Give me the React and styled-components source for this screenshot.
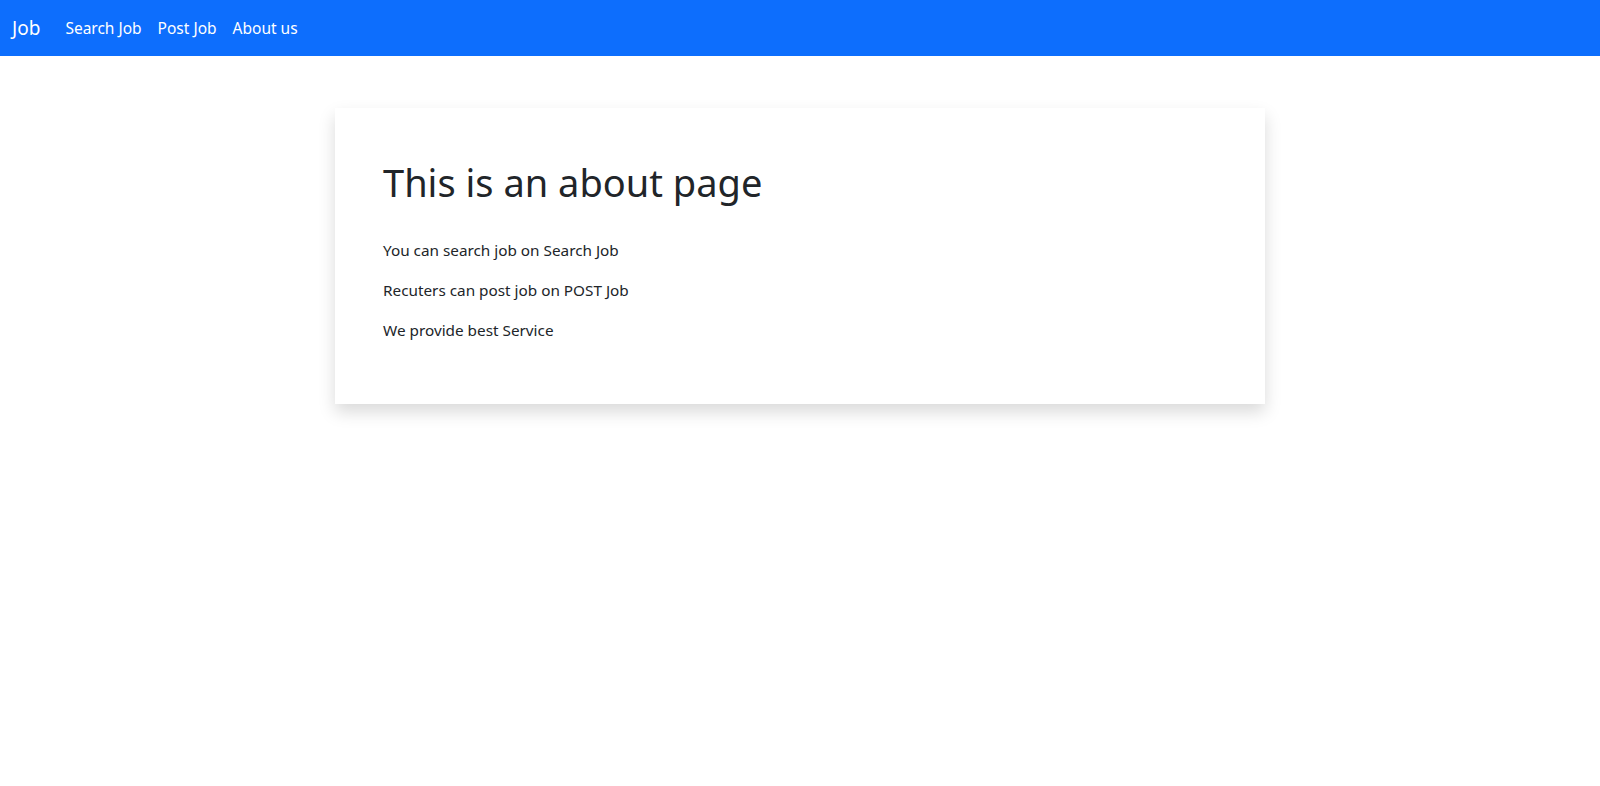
import React from 'react'
import styled, { createGlobalStyle } from 'styled-components';

const GlobalStyle = createGlobalStyle`
  body {
    margin: 0;
    font-family: 'Segoe UI', 'Noto Sans', sans-serif;
    color: #212529;
    background: #fff;
  }
  #root {
    min-height: 100vh;
  }
`;

const NavBar = styled.nav`
  display: flex;
  align-items: center;
  height: 56px;
  padding: 0 12px;
  background-color: #0d6efd;
`;

const Brand = styled.a`
  color: #fff;
  font-size: 19px;
  margin-right: 17px;
  text-decoration: none;
`;

const NavList = styled.div`
  display: flex;
  align-items: center;
`;

const NavLink = styled.a`
  color: #fff;
  font-size: 15.5px;
  padding: 8px;
  text-decoration: none;
  cursor: pointer;
`;

const Main = styled.main`
  display: flex;
  justify-content: center;
  padding-top: 52px;
`;

const Card = styled.div`
  width: 930px;
  box-sizing: border-box;
  padding: 52px 48px 46px;
  background-color: #fff;
  box-shadow: 0 .5rem 1rem rgba(0, 0, 0, .15);
`;

const Title = styled.h1`
  font-size: 38px;
  font-weight: 400;
  line-height: 1.2;
  margin: 0 0 32px;
`;

const Text = styled.p`
  font-size: 15.3px;
  line-height: 24px;
  margin: 0 0 16px;
`;

function App() {
    return (
        <>
            <GlobalStyle />
            <NavBar>
                <Brand>Job</Brand>
                <NavList>
                    <NavLink>Search Job</NavLink>
                    <NavLink>Post Job</NavLink>
                    <NavLink>About us</NavLink>
                </NavList>
            </NavBar>
            <Main>
                <Card>
                    <Title>This is an about page</Title>
                    <Text>You can search job on Search Job</Text>
                    <Text>Recuters can post job on POST Job</Text>
                    <Text>We provide best Service</Text>
                </Card>
            </Main>
        </>
    )
}

export default App
